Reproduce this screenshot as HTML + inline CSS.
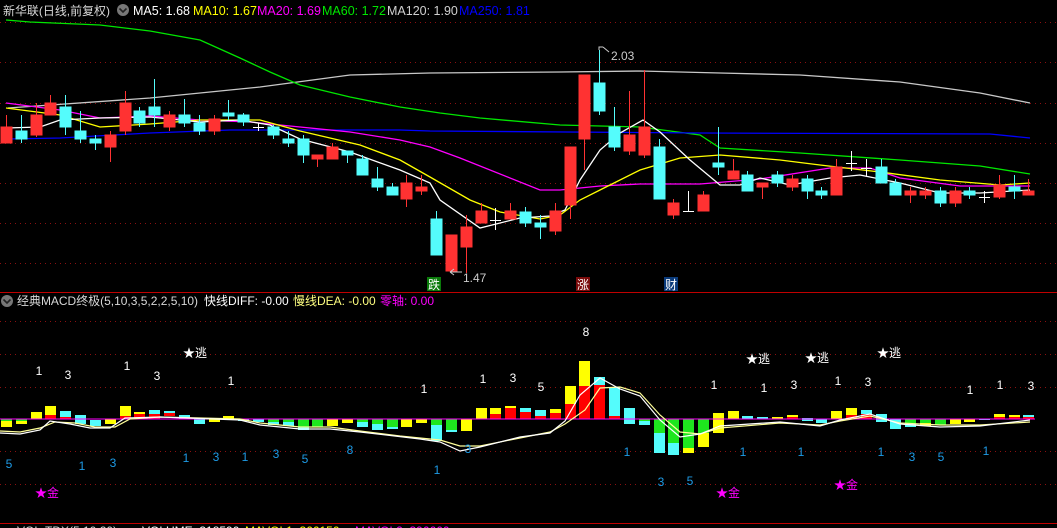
<!DOCTYPE html>
<html><head><meta charset="utf-8"><style>
html,body{margin:0;padding:0;background:#000;width:1057px;height:528px;overflow:hidden}
svg{display:block}
text{font-family:"Liberation Sans","Noto Sans CJK SC",sans-serif}
</style></head><body>
<svg width="1057" height="528" viewBox="0 0 1057 528" xmlns="http://www.w3.org/2000/svg">
<rect width="1057" height="528" fill="#000"/>
<g stroke="#8a1010" stroke-width="1" stroke-dasharray="1,4">
<line x1="0" y1="22.5" x2="1057" y2="22.5"/><line x1="0" y1="62.5" x2="1057" y2="62.5"/>
<line x1="0" y1="103.5" x2="1057" y2="103.5"/><line x1="0" y1="143.5" x2="1057" y2="143.5"/>
<line x1="0" y1="183.5" x2="1057" y2="183.5"/><line x1="0" y1="223.5" x2="1057" y2="223.5"/>
<line x1="0" y1="263.5" x2="1057" y2="263.5"/>
<line x1="0" y1="321.5" x2="1057" y2="321.5"/><line x1="0" y1="354.5" x2="1057" y2="354.5"/>
<line x1="0" y1="387.5" x2="1057" y2="387.5"/><line x1="0" y1="451.5" x2="1057" y2="451.5"/>
<line x1="0" y1="484.5" x2="1057" y2="484.5"/>
</g>
<line x1="0" y1="292.5" x2="1057" y2="292.5" stroke="#c00000"/>
<line x1="0" y1="523.5" x2="1057" y2="523.5" stroke="#c00000"/>

<text x="3" y="15" font-size="12" fill="#d8d8d8" textLength="107" lengthAdjust="spacingAndGlyphs">新华联(日线,前复权)</text>
<circle cx="123" cy="10" r="6" fill="#777"/><path d="M119.5 8.5 L123 12 L126.5 8.5" stroke="#222" stroke-width="1.6" fill="none"/>
<text y="15" font-size="12.5"><tspan x="133" fill="#fff">MA5: 1.68</tspan><tspan x="193" fill="#ffff00">MA10: 1.67</tspan><tspan x="257" fill="#ff00ff">MA20: 1.69</tspan><tspan x="322" fill="#00e600">MA60: 1.72</tspan><tspan x="387" fill="#d0d0d0">MA120: 1.90</tspan><tspan x="459" fill="#0000ff">MA250: 1.81</tspan></text>

<g fill="none" stroke-width="1.3">
<polyline stroke="#c8c8c8" points="8,108 150,98 260,87 350,75 430,73 560,72 640,71 720,73 800,75 900,82 980,93 1030,103"/>
<polyline stroke="#00e600" points="6,20 30,22 100,25 150,31 200,40 240,58 270,72 300,85 350,97 400,107 440,113 480,118 560,125 640,127 700,135 720,148 800,153 900,160 980,166 1030,174"/>
<polyline stroke="#0000ff" points="6,139 60,138 150,133 230,130 400,130 430,131 700,133 990,134 1030,138"/>
<polyline stroke="#ff00ff" points="6,103 60,110 100,118 150,116 200,120 250,122 300,127 350,132 400,140 430,147 460,158 540,190 560,190 600,186 640,184 700,184 760,179 830,168 870,168 900,178 960,186 1030,186"/>
<polyline stroke="#ffff00" points="6,108 60,115 100,127 150,124 200,120 260,120 300,131 360,145 400,160 430,177 470,200 500,212 540,219 560,215 580,200 600,190 640,170 680,158 720,155 780,160 820,165 880,172 940,180 1000,185 1030,183"/>
<polyline stroke="#fff" points="6,128 40,127 60,120 100,118 150,117 200,122 240,120 270,125 300,139 350,152 400,170 430,183 440,200 480,228 520,218 550,216 565,210 580,180 600,150 620,133 643,120 660,132 690,160 720,185 740,185 760,178 790,185 830,178 860,175 900,183 940,193 980,193 1030,190"/>
</g>

<g stroke-width="1">
<g stroke="#ff3232" fill="#ff3232">
<line x1="6.5" y1="115" x2="6.5" y2="143"/><rect x="1" y="127" width="11" height="16"/>
<line x1="36.5" y1="103" x2="36.5" y2="137"/><rect x="31" y="115" width="11" height="20"/>
<line x1="50.5" y1="95" x2="50.5" y2="115"/><rect x="45" y="103" width="11" height="12"/>
<line x1="110.5" y1="131" x2="110.5" y2="162"/><rect x="105" y="135" width="11" height="12"/>
<line x1="125.5" y1="91" x2="125.5" y2="135"/><rect x="120" y="103" width="11" height="28"/>
<line x1="169.5" y1="111" x2="169.5" y2="131"/><rect x="164" y="115" width="11" height="12"/>
<line x1="214.5" y1="115" x2="214.5" y2="135"/><rect x="209" y="119" width="11" height="12"/>
<line x1="317.5" y1="155" x2="317.5" y2="167"/><rect x="312" y="155" width="11" height="4"/>
<line x1="332.5" y1="143" x2="332.5" y2="159"/><rect x="327" y="147" width="11" height="12"/>
<line x1="406.5" y1="175" x2="406.5" y2="207"/><rect x="401" y="183" width="11" height="16"/>
<line x1="421.5" y1="175" x2="421.5" y2="195"/><rect x="416" y="187" width="11" height="4"/>
<line x1="451.5" y1="235" x2="451.5" y2="271"/><rect x="446" y="235" width="11" height="36"/>
<line x1="466.5" y1="215" x2="466.5" y2="273"/><rect x="461" y="227" width="11" height="20"/>
<line x1="481.5" y1="203" x2="481.5" y2="223"/><rect x="476" y="211" width="11" height="12"/>
<line x1="510.5" y1="203" x2="510.5" y2="219"/><rect x="505" y="211" width="11" height="8"/>
<line x1="555.5" y1="203" x2="555.5" y2="235"/><rect x="550" y="211" width="11" height="20"/>
<line x1="570.5" y1="147" x2="570.5" y2="219"/><rect x="565" y="147" width="11" height="58"/>
<line x1="584.5" y1="75" x2="584.5" y2="170"/><rect x="579" y="75" width="11" height="64"/>
<line x1="629.5" y1="91" x2="629.5" y2="155"/><rect x="624" y="135" width="11" height="16"/>
<line x1="644.5" y1="70" x2="644.5" y2="158"/><rect x="639" y="127" width="11" height="28"/>
<line x1="673.5" y1="199" x2="673.5" y2="219"/><rect x="668" y="203" width="11" height="12"/>
<line x1="703.5" y1="191" x2="703.5" y2="211"/><rect x="698" y="195" width="11" height="16"/>
<line x1="733.5" y1="159" x2="733.5" y2="179"/><rect x="728" y="171" width="11" height="8"/>
<line x1="762.5" y1="183" x2="762.5" y2="199"/><rect x="757" y="183" width="11" height="4"/>
<line x1="792.5" y1="175" x2="792.5" y2="191"/><rect x="787" y="179" width="11" height="8"/>
<line x1="836.5" y1="159" x2="836.5" y2="195"/><rect x="831" y="167" width="11" height="28"/>
<line x1="910.5" y1="187" x2="910.5" y2="203"/><rect x="905" y="191" width="11" height="4"/>
<line x1="925.5" y1="187" x2="925.5" y2="199"/><rect x="920" y="191" width="11" height="4"/>
<line x1="955.5" y1="187" x2="955.5" y2="207"/><rect x="950" y="191" width="11" height="12"/>
<line x1="999.5" y1="175" x2="999.5" y2="199"/><rect x="994" y="185" width="11" height="12"/>
<line x1="1028.5" y1="179" x2="1028.5" y2="195"/><rect x="1023" y="191" width="11" height="4"/>
</g>
<g stroke="#54fcfc" fill="#54fcfc">
<line x1="21.5" y1="115" x2="21.5" y2="143"/><rect x="16" y="131" width="11" height="8"/>
<line x1="65.5" y1="95" x2="65.5" y2="135"/><rect x="60" y="107" width="11" height="20"/>
<line x1="80.5" y1="111" x2="80.5" y2="143"/><rect x="75" y="131" width="11" height="8"/>
<line x1="95.5" y1="135" x2="95.5" y2="150"/><rect x="90" y="139" width="11" height="4"/>
<line x1="139.5" y1="107" x2="139.5" y2="127"/><rect x="134" y="111" width="11" height="12"/>
<line x1="154.5" y1="79" x2="154.5" y2="127"/><rect x="149" y="107" width="11" height="8"/>
<line x1="184.5" y1="99" x2="184.5" y2="127"/><rect x="179" y="115" width="11" height="8"/>
<line x1="199.5" y1="115" x2="199.5" y2="135"/><rect x="194" y="123" width="11" height="8"/>
<line x1="228.5" y1="100" x2="228.5" y2="120"/><rect x="223" y="113" width="11" height="3"/>
<line x1="243.5" y1="113" x2="243.5" y2="126"/><rect x="238" y="115" width="11" height="7"/>
<line x1="273.5" y1="125" x2="273.5" y2="139"/><rect x="268" y="127" width="11" height="8"/>
<line x1="288.5" y1="131" x2="288.5" y2="147"/><rect x="283" y="139" width="11" height="4"/>
<line x1="303.5" y1="135" x2="303.5" y2="163"/><rect x="298" y="139" width="11" height="16"/>
<line x1="347.5" y1="151" x2="347.5" y2="163"/><rect x="342" y="151" width="11" height="4"/>
<line x1="362.5" y1="155" x2="362.5" y2="175"/><rect x="357" y="159" width="11" height="16"/>
<line x1="377.5" y1="167" x2="377.5" y2="191"/><rect x="372" y="179" width="11" height="8"/>
<line x1="392.5" y1="183" x2="392.5" y2="195"/><rect x="387" y="187" width="11" height="8"/>
<line x1="436.5" y1="211" x2="436.5" y2="255"/><rect x="431" y="219" width="11" height="36"/>
<line x1="525.5" y1="207" x2="525.5" y2="227"/><rect x="520" y="212" width="11" height="11"/>
<line x1="540.5" y1="215" x2="540.5" y2="239"/><rect x="535" y="223" width="11" height="4"/>
<line x1="599.5" y1="50" x2="599.5" y2="115"/><rect x="594" y="83" width="11" height="28"/>
<line x1="614.5" y1="107" x2="614.5" y2="151"/><rect x="609" y="127" width="11" height="20"/>
<line x1="659.5" y1="139" x2="659.5" y2="199"/><rect x="654" y="147" width="11" height="52"/>
<line x1="718.5" y1="127" x2="718.5" y2="175"/><rect x="713" y="163" width="11" height="4"/>
<line x1="747.5" y1="171" x2="747.5" y2="191"/><rect x="742" y="175" width="11" height="16"/>
<line x1="777.5" y1="171" x2="777.5" y2="187"/><rect x="772" y="175" width="11" height="8"/>
<line x1="807.5" y1="175" x2="807.5" y2="199"/><rect x="802" y="179" width="11" height="12"/>
<line x1="821.5" y1="187" x2="821.5" y2="199"/><rect x="816" y="191" width="11" height="4"/>
<line x1="881.5" y1="159" x2="881.5" y2="183"/><rect x="876" y="167" width="11" height="16"/>
<line x1="895.5" y1="179" x2="895.5" y2="195"/><rect x="890" y="183" width="11" height="12"/>
<line x1="940.5" y1="187" x2="940.5" y2="207"/><rect x="935" y="191" width="11" height="12"/>
<line x1="969.5" y1="187" x2="969.5" y2="199"/><rect x="964" y="191" width="11" height="4"/>
<line x1="1014.5" y1="175" x2="1014.5" y2="199"/><rect x="1009" y="187" width="11" height="4"/>
</g>
<g stroke="#fff">
<line x1="258.5" y1="123" x2="258.5" y2="131"/><line x1="253" y1="127.5" x2="264" y2="127.5"/>
<line x1="495.5" y1="208" x2="495.5" y2="230"/><line x1="490" y1="220.5" x2="501" y2="220.5"/>
<line x1="688.5" y1="191" x2="688.5" y2="211"/><line x1="683" y1="211.5" x2="694" y2="211.5"/>
<line x1="851.5" y1="151" x2="851.5" y2="171"/><line x1="846" y1="163.5" x2="857" y2="163.5"/>
<line x1="866.5" y1="159" x2="866.5" y2="177"/><line x1="861" y1="168.5" x2="872" y2="168.5"/>
<line x1="984.5" y1="191" x2="984.5" y2="203"/><line x1="979" y1="197.5" x2="990" y2="197.5"/>
</g>
</g>
<path d="M599 50 L599 47 L603 47 M603 47 L609 52" stroke="#ccc" fill="none"/>
<text x="611" y="60" font-size="12" fill="#ccc">2.03</text>
<path d="M450 272 L462 272 M450 272 L454 269 M450 272 L454 275" stroke="#ccc" fill="none"/>
<text x="463" y="282" font-size="12" fill="#ccc">1.47</text>
<rect x="427" y="277" width="14" height="14" fill="#0a7a0a"/><text x="428" y="289" font-size="12" fill="#fff">跌</text>
<rect x="576" y="277" width="14" height="14" fill="#7a0a0a"/><text x="577" y="289" font-size="12" fill="#fff">涨</text>
<rect x="664" y="277" width="14" height="14" fill="#0a3a7a"/><text x="665" y="289" font-size="12" fill="#fff">财</text>

<circle cx="7" cy="301" r="6" fill="#777"/><path d="M3.5 299.5 L7 303 L10.5 299.5" stroke="#222" stroke-width="1.6" fill="none"/>
<text x="17" y="305" font-size="12" fill="#d8d8d8" textLength="181" lengthAdjust="spacingAndGlyphs">经典MACD终极(5,10,3,5,2,2,5,10)</text>
<text y="305" font-size="12"><tspan x="204" fill="#fff">快线DIFF: -0.00</tspan><tspan x="293" fill="#ffff80">慢线DEA: -0.00</tspan><tspan x="380" fill="#ff00ff">零轴: 0.00</tspan></text>

<g>
<g fill="#ffff00">
<rect x="1" y="421" width="11" height="6"/><rect x="16" y="421" width="11" height="3"/><rect x="31" y="412" width="11" height="7"/><rect x="45" y="406" width="11" height="9"/>
<rect x="105" y="419" width="11" height="5"/><rect x="120" y="406" width="11" height="10"/><rect x="134" y="412" width="11" height="2"/><rect x="209" y="419" width="11" height="3"/><rect x="223" y="416" width="11" height="4"/>
<rect x="327" y="419" width="11" height="7"/><rect x="342" y="419" width="11" height="4"/><rect x="401" y="419" width="11" height="8"/><rect x="416" y="419" width="11" height="4"/>
<rect x="461" y="419" width="11" height="12"/><rect x="476" y="408" width="11" height="11"/><rect x="490" y="408" width="11" height="6"/><rect x="505" y="406" width="11" height="2"/>
<rect x="550" y="409" width="11" height="4"/><rect x="565" y="386" width="11" height="18"/><rect x="579" y="361" width="11" height="25"/>
<rect x="683" y="448" width="11" height="5"/><rect x="698" y="433" width="11" height="14"/><rect x="713" y="413" width="11" height="20"/><rect x="728" y="411" width="11" height="8"/>
<rect x="772" y="417" width="11" height="2"/><rect x="787" y="415" width="11" height="2"/><rect x="831" y="411" width="11" height="8"/><rect x="846" y="408" width="11" height="7"/>
<rect x="920" y="423" width="11" height="3"/><rect x="950" y="419" width="11" height="5"/><rect x="964" y="419" width="11" height="3"/><rect x="994" y="414" width="11" height="3"/><rect x="1009" y="415" width="11" height="2"/>
</g>
<g fill="#ff0000">
<rect x="45" y="415" width="11" height="4"/><rect x="60" y="417" width="11" height="2"/><rect x="120" y="416" width="11" height="3"/><rect x="134" y="414" width="11" height="5"/><rect x="149" y="414" width="11" height="5"/><rect x="164" y="413" width="11" height="3"/>
<rect x="490" y="414" width="11" height="5"/><rect x="505" y="408" width="11" height="11"/><rect x="520" y="412" width="11" height="7"/><rect x="535" y="416" width="11" height="3"/><rect x="550" y="413" width="11" height="6"/>
<rect x="565" y="404" width="11" height="15"/><rect x="579" y="386" width="11" height="33"/><rect x="594" y="385" width="11" height="34"/><rect x="609" y="416" width="11" height="3"/>
<rect x="787" y="417" width="11" height="2"/><rect x="846" y="415" width="11" height="4"/><rect x="861" y="414" width="11" height="5"/><rect x="994" y="417" width="11" height="2"/><rect x="1009" y="417" width="11" height="2"/><rect x="1023" y="417" width="11" height="2"/>
</g>
<g fill="#54fcfc">
<rect x="60" y="411" width="11" height="6"/><rect x="75" y="415" width="11" height="9"/><rect x="90" y="420" width="11" height="6"/><rect x="149" y="410" width="11" height="4"/><rect x="164" y="411" width="11" height="2"/><rect x="179" y="415" width="11" height="4"/><rect x="194" y="419" width="11" height="5"/>
<rect x="238" y="419" width="11" height="2"/><rect x="253" y="419" width="11" height="3"/><rect x="268" y="422" width="11" height="3"/><rect x="283" y="422" width="11" height="4"/><rect x="298" y="427" width="11" height="3"/><rect x="357" y="422" width="11" height="5"/><rect x="372" y="424" width="11" height="6"/><rect x="387" y="427" width="11" height="2"/>
<rect x="431" y="425" width="11" height="16"/><rect x="446" y="430" width="11" height="2"/><rect x="520" y="408" width="11" height="4"/><rect x="535" y="410" width="11" height="6"/>
<rect x="594" y="377" width="11" height="8"/><rect x="609" y="387" width="11" height="29"/><rect x="624" y="408" width="11" height="16"/><rect x="639" y="421" width="11" height="4"/><rect x="654" y="433" width="11" height="20"/><rect x="668" y="443" width="11" height="12"/>
<rect x="742" y="416" width="11" height="3"/><rect x="757" y="417" width="11" height="2"/><rect x="802" y="418" width="11" height="3"/><rect x="816" y="419" width="11" height="4"/><rect x="861" y="410" width="11" height="4"/><rect x="876" y="414" width="11" height="8"/><rect x="890" y="419" width="11" height="10"/><rect x="905" y="424" width="11" height="3"/><rect x="979" y="419" width="11" height="1"/><rect x="1023" y="415" width="11" height="2"/>
</g>
<g fill="#1ee61e">
<rect x="1" y="419" width="11" height="2"/><rect x="16" y="419" width="11" height="2"/><rect x="268" y="419" width="11" height="3"/><rect x="283" y="419" width="11" height="3"/><rect x="298" y="419" width="11" height="8"/><rect x="312" y="419" width="11" height="8"/>
<rect x="357" y="419" width="11" height="3"/><rect x="372" y="419" width="11" height="5"/><rect x="387" y="419" width="11" height="8"/><rect x="431" y="419" width="11" height="6"/><rect x="446" y="419" width="11" height="11"/>
<rect x="639" y="419" width="11" height="2"/><rect x="654" y="419" width="11" height="14"/><rect x="668" y="419" width="11" height="24"/><rect x="683" y="419" width="11" height="29"/><rect x="698" y="419" width="11" height="14"/>
<rect x="905" y="419" width="11" height="5"/><rect x="920" y="419" width="11" height="4"/><rect x="935" y="419" width="11" height="6"/>
</g>
</g>
<line x1="0" y1="419" x2="1035" y2="419" stroke="#ff00ff" stroke-width="1"/>
<g fill="none" stroke-width="1.2">
<polyline stroke="#ffff99" points="0,431 20,432 40,428 55,422 75,423 95,427 115,427 130,419 160,417 240,419 260,423 300,427 330,427 360,431 400,436 440,440 460,446 480,446 520,438 550,432 565,424 585,410 600,388 620,387 640,393 660,415 680,432 700,434 720,428 780,423 820,425 840,421 870,416 900,423 940,425 980,425 1030,422"/>
<polyline stroke="#fff" points="0,433 20,434 40,430 50,421 70,424 90,428 110,428 125,418 160,417 240,420 260,425 300,429 330,429 360,432 420,439 440,442 460,451 480,447 520,437 550,433 565,421 580,395 600,378 620,389 640,396 660,420 680,437 700,434 720,426 780,422 820,426 840,420 870,414 900,424 940,427 980,426 1030,420"/>
</g>

<g font-size="12" text-anchor="middle" fill="#fff">
<text x="39" y="375">1</text><text x="68" y="379">3</text><text x="127" y="370">1</text><text x="157" y="380">3</text>
<text x="231" y="385">1</text><text x="424" y="393">1</text><text x="483" y="383">1</text><text x="513" y="382">3</text><text x="541" y="391">5</text>
<text x="586" y="336">8</text><text x="714" y="389">1</text><text x="764" y="392">1</text><text x="794" y="389">3</text><text x="838" y="385">1</text><text x="868" y="386">3</text>
<text x="970" y="394">1</text><text x="1000" y="389">1</text><text x="1031" y="390">3</text>
<text x="195" y="357">★逃</text><text x="758" y="363">★逃</text><text x="817" y="362">★逃</text><text x="889" y="357">★逃</text>
</g>
<g font-size="12" text-anchor="middle" fill="#1e9be6">
<text x="9" y="468">5</text><text x="82" y="470">1</text><text x="113" y="467">3</text><text x="186" y="462">1</text><text x="216" y="461">3</text><text x="245" y="461">1</text>
<text x="276" y="458">3</text><text x="305" y="463">5</text><text x="350" y="454">8</text><text x="437" y="474">1</text><text x="468" y="453">3</text>
<text x="627" y="456">1</text><text x="661" y="486">3</text><text x="690" y="485">5</text><text x="743" y="456">1</text><text x="801" y="456">1</text>
<text x="881" y="456">1</text><text x="912" y="461">3</text><text x="941" y="461">5</text><text x="986" y="455">1</text>
</g>
<g font-size="12" text-anchor="middle" fill="#ff00ff">
<text x="47" y="497">★金</text><text x="728" y="497">★金</text><text x="846" y="489">★金</text>
</g>
<text y="535" font-size="12"><tspan x="17" fill="#d8d8d8">VOL-TDX(5,10,20)</tspan><tspan x="142" fill="#fff">VOLUME: 318590</tspan><tspan x="245" fill="#ffff00">MAVOL1: 366150</tspan><tspan x="355" fill="#ff00ff">MAVOL2: 396660</tspan></text>
</svg>
</body></html>
